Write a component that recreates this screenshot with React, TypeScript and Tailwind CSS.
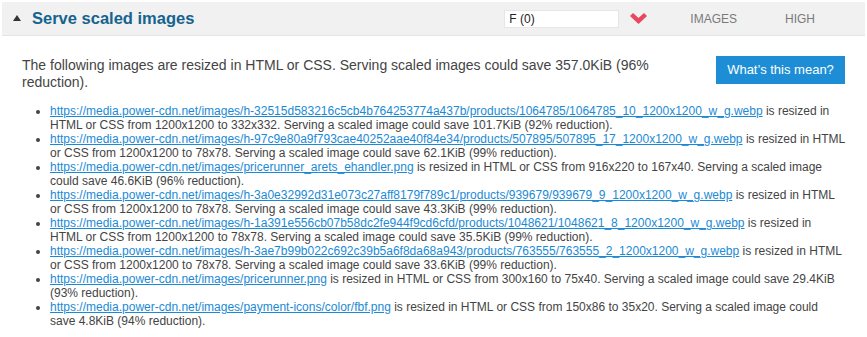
import React from "react";

const items: { url: string; rest: string }[] = [
  {
    url: "https://media.power-cdn.net/images/h-32515d583216c5cb4b764253774a437b/products/1064785/1064785_10_1200x1200_w_g.webp",
    rest: " is resized in HTML or CSS from 1200x1200 to 332x332. Serving a scaled image could save 101.7KiB (92% reduction).",
  },
  {
    url: "https://media.power-cdn.net/images/h-97c9e80a9f793cae40252aae40f84e34/products/507895/507895_17_1200x1200_w_g.webp",
    rest: " is resized in HTML or CSS from 1200x1200 to 78x78. Serving a scaled image could save 62.1KiB (99% reduction).",
  },
  {
    url: "https://media.power-cdn.net/images/pricerunner_arets_ehandler.png",
    rest: " is resized in HTML or CSS from 916x220 to 167x40. Serving a scaled image could save 46.6KiB (96% reduction).",
  },
  {
    url: "https://media.power-cdn.net/images/h-3a0e32992d31e073c27aff8179f789c1/products/939679/939679_9_1200x1200_w_g.webp",
    rest: " is resized in HTML or CSS from 1200x1200 to 78x78. Serving a scaled image could save 43.3KiB (99% reduction).",
  },
  {
    url: "https://media.power-cdn.net/images/h-1a391e556cb07b58dc2fe944f9cd6cfd/products/1048621/1048621_8_1200x1200_w_g.webp",
    rest: " is resized in HTML or CSS from 1200x1200 to 78x78. Serving a scaled image could save 35.5KiB (99% reduction).",
  },
  {
    url: "https://media.power-cdn.net/images/h-3ae7b99b022c692c39b5a6f8da68a943/products/763555/763555_2_1200x1200_w_g.webp",
    rest: " is resized in HTML or CSS from 1200x1200 to 78x78. Serving a scaled image could save 33.6KiB (99% reduction).",
  },
  {
    url: "https://media.power-cdn.net/images/pricerunner.png",
    rest: " is resized in HTML or CSS from 300x160 to 75x40. Serving a scaled image could save 29.4KiB (93% reduction).",
  },
  {
    url: "https://media.power-cdn.net/images/payment-icons/color/fbf.png",
    rest: " is resized in HTML or CSS from 150x86 to 35x20. Serving a scaled image could save 4.8KiB (94% reduction).",
  },
];

export default function App() {
  return (
    <div
      className="w-[867px] h-[337px] bg-white px-[2px] pt-[2px] overflow-hidden"
      style={{ fontFamily: '"Liberation Sans", Arial, sans-serif' }}
    >
      <div className="h-[34px] bg-[#f1f1f1] border-b border-[#e4e4e4] flex items-center">
        <svg width="8" height="6" viewBox="0 0 8 6" className="ml-[11px] mt-[-1px]">
          <polygon points="4,0 8,6 0,6" fill="#333" />
        </svg>
        <span className="ml-[11px] text-[16.5px] font-bold text-[#15638f] leading-none">
          Serve scaled images
        </span>
        <div className="ml-auto w-[115px] h-[18px] bg-white border border-[#e6e6e6] flex items-center pl-[4px] text-[12px] text-[#222]">
          F (0)
        </div>
        <svg width="17" height="11" viewBox="0 0 17 11" className="ml-[11px]">
          <polygon points="0,3 3,0 8.5,5 14,0 17,3 8.5,11" fill="#e8475d" />
        </svg>
        <span className="ml-[43px] text-[12px] text-[#7a7a7a]">IMAGES</span>
        <span className="ml-[48px] mr-[50px] text-[12px] text-[#7a7a7a]">HIGH</span>
      </div>

      <div className="pl-[20px] pr-[20px] pt-[21px]">
        <div className="flex items-start">
          <p className="flex-1 text-[14px] leading-[17px] text-[#444] pr-[20px]">
            The following images are resized in HTML or CSS. Serving scaled images could save 357.0KiB (96% reduction).
          </p>
          <button className="mt-[-1px] w-[129px] h-[28px] bg-[#1d8ed6] text-white text-[13px] flex items-center justify-center">
            What’s this mean?
          </button>
        </div>
        <ul className="list-disc pl-[28px] mt-[13px] mr-[-1px] text-[12px] leading-[14px] text-[#444]">
          {items.map((it, i) => (
            <li key={i}>
              <a className="text-[#1a8ad6] underline" href="#">
                {it.url}
              </a>
              {it.rest}
            </li>
          ))}
        </ul>
      </div>
    </div>
  );
}
